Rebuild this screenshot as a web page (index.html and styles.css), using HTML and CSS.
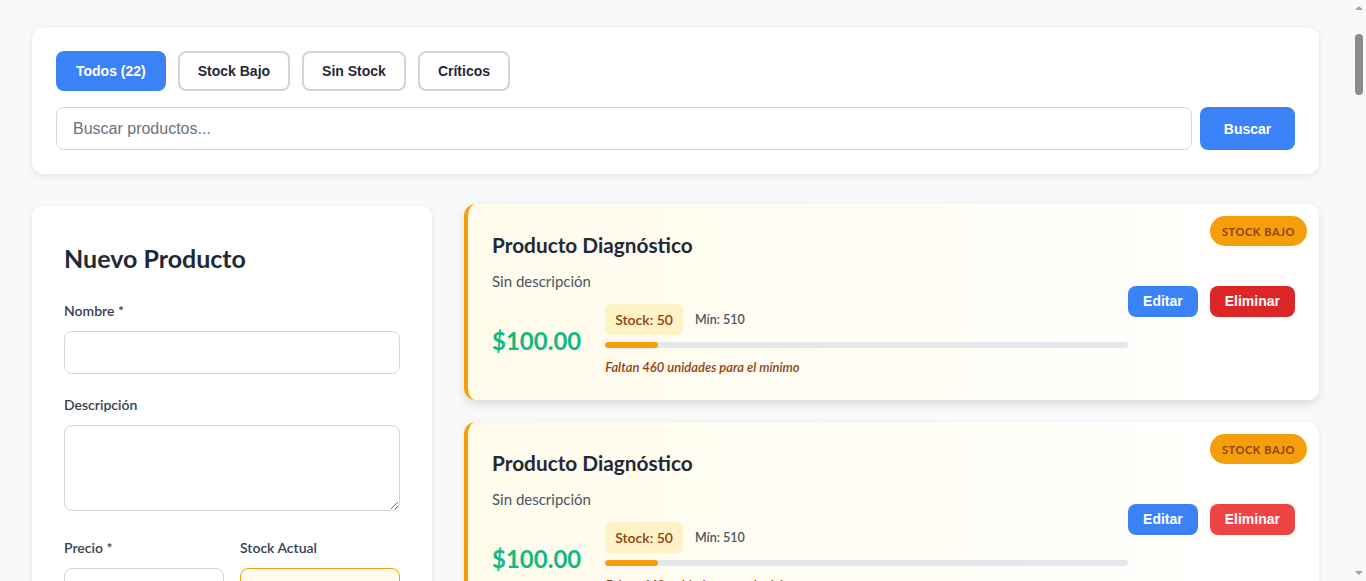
FILE: index.html
```html
<!DOCTYPE html>
<html lang="es">
<head>
<meta charset="utf-8">
<title>Inventario</title>
<link rel="stylesheet" href="styles.css">
</head>
<body>
<div class="app">
  <section class="panel filters">
    <div class="tabs">
      <button class="tab active">Todos (22)</button>
      <button class="tab">Stock Bajo</button>
      <button class="tab">Sin Stock</button>
      <button class="tab">Críticos</button>
    </div>
    <div class="search">
      <input class="search-input" type="text" placeholder="Buscar productos...">
      <button class="btn btn-blue btn-search">Buscar</button>
    </div>
  </section>

  <div class="layout">
    <aside class="panel form-card">
      <h2 class="form-title">Nuevo Producto</h2>
      <div class="field">
        <label class="label">Nombre *</label>
        <input class="input" type="text">
      </div>
      <div class="field">
        <label class="label">Descripción</label>
        <textarea class="input textarea"></textarea>
      </div>
      <div class="field-row">
        <div class="field">
          <label class="label">Precio *</label>
          <input class="input" type="text">
        </div>
        <div class="field">
          <label class="label">Stock Actual</label>
          <input class="input input-warn" type="text">
        </div>
      </div>
      <div class="field-row">
        <div class="field">
          <label class="label">Stock Mínimo</label>
          <input class="input" type="text">
        </div>
        <div class="field">
          <label class="label">Categoría</label>
          <input class="input" type="text">
        </div>
      </div>
    </aside>

    <main class="list">
      <article class="product lifted">
        <span class="badge">STOCK BAJO</span>
        <div class="info">
          <h3 class="name">Producto Diagnóstico</h3>
          <p class="desc">Sin descripción</p>
          <div class="meta">
            <div class="price">$100.00</div>
            <div class="stock">
              <div class="stock-top">
                <span class="stock-pill">Stock: 50</span>
                <span class="min">Mín: 510</span>
              </div>
              <div class="bar"><div class="fill" style="width:10%"></div></div>
              <p class="warn">Faltan 460 unidades para el mínimo</p>
            </div>
          </div>
        </div>
        <div class="actions">
          <button class="btn btn-blue btn-sm">Editar</button>
          <button class="btn btn-red btn-sm">Eliminar</button>
        </div>
      </article>

      <article class="product">
        <span class="badge">STOCK BAJO</span>
        <div class="info">
          <h3 class="name">Producto Diagnóstico</h3>
          <p class="desc">Sin descripción</p>
          <div class="meta">
            <div class="price">$100.00</div>
            <div class="stock">
              <div class="stock-top">
                <span class="stock-pill">Stock: 50</span>
                <span class="min">Mín: 510</span>
              </div>
              <div class="bar"><div class="fill" style="width:10%"></div></div>
              <p class="warn">Faltan 460 unidades para el mínimo</p>
            </div>
          </div>
        </div>
        <div class="actions">
          <button class="btn btn-blue btn-sm">Editar</button>
          <button class="btn btn-red-light btn-sm">Eliminar</button>
        </div>
      </article>

      <article class="product">
        <span class="badge">STOCK BAJO</span>
        <div class="info">
          <h3 class="name">Producto Diagnóstico</h3>
          <p class="desc">Sin descripción</p>
          <div class="meta">
            <div class="price">$100.00</div>
            <div class="stock">
              <div class="stock-top">
                <span class="stock-pill">Stock: 50</span>
                <span class="min">Mín: 510</span>
              </div>
              <div class="bar"><div class="fill" style="width:10%"></div></div>
              <p class="warn">Faltan 460 unidades para el mínimo</p>
            </div>
          </div>
        </div>
        <div class="actions">
          <button class="btn btn-blue btn-sm">Editar</button>
          <button class="btn btn-red-light btn-sm">Eliminar</button>
        </div>
      </article>
    </main>
  </div>
</div>

<div class="scrollbar" aria-hidden="true">
  <span class="sb-arrow sb-up"></span>
  <span class="sb-thumb"></span>
  <span class="sb-arrow sb-down"></span>
</div>
</body>
</html>
```

FILE: styles.css
```css
* { box-sizing: border-box; }

html, body {
  margin: 0;
  padding: 0;
  background: #f8f9fb;
}

body {
  font-family: Lato, "Noto Sans", sans-serif;
  color: #1f2937;
  padding-right: 15px;
}

/* drawn scrollbar */
.scrollbar {
  position: fixed;
  top: 0;
  right: 0;
  width: 15px;
  height: 100vh;
  background: #f9f9f9;
  display: flex;
  flex-direction: column;
  align-items: center;
}

.sb-arrow {
  width: 0;
  height: 0;
  border-left: 4px solid transparent;
  border-right: 4px solid transparent;
}

.sb-up {
  margin-top: 6px;
  border-bottom: 4px solid #a3a3a3;
}

.sb-thumb {
  width: 8px;
  height: 61px;
  margin-top: 24px;
  margin-left: 1px;
  border-radius: 4px;
  background: #8c8c8c;
}

.sb-down {
  margin-top: auto;
  margin-bottom: 6px;
  border-top: 4px solid #a3a3a3;
}

.app {
  padding: 27px 32px 40px;
}

.panel {
  background: #ffffff;
  border-radius: 12px;
  box-shadow: 0 2px 6px rgba(0, 0, 0, 0.09);
}

.filters {
  padding: 24px;
}

.tabs {
  display: flex;
  gap: 12px;
  margin-bottom: 16px;
}

.tab {
  height: 40px;
  padding: 0 18px;
  border: 2px solid #d1d5db;
  border-radius: 8px;
  background: #ffffff;
  color: #1f2937;
  font-family: "Liberation Sans", Arial, sans-serif;
  font-weight: 700;
  font-size: 14px;
}

.tab.active {
  background: #3b82f6;
  border-color: #3b82f6;
  color: #ffffff;
}

.search {
  display: flex;
  gap: 8px;
}

.search-input {
  flex: 1;
  height: 43px;
  padding: 0 16px;
  border: 1px solid #d1d5db;
  border-radius: 8px;
  font-family: "Liberation Sans", Arial, sans-serif;
  font-size: 16px;
  color: #1f2937;
}

.search-input::placeholder {
  color: #6b7280;
}

.btn {
  border: none;
  border-radius: 8px;
  color: #ffffff;
  font-family: "Liberation Sans", Arial, sans-serif;
  font-weight: 700;
  font-size: 14px;
}

.btn-blue { background: #3b82f6; }
.btn-red { background: #dc2626; }
.btn-red-light { background: #ef4444; }

.btn-search {
  width: 95px;
  height: 43px;
}

.layout {
  display: grid;
  grid-template-columns: 400px 1fr;
  gap: 32px;
  margin-top: 32px;
  align-items: start;
}

.form-card {
  padding: 32px;
}

.form-title {
  margin: 5px 0 29px;
  font-size: 25px;
  font-weight: 700;
  color: #1f2937;
}

.field {
  display: flex;
  flex-direction: column;
  margin-bottom: 22px;
  min-width: 0;
}

.label {
  font-size: 14px;
  font-weight: 600;
  color: #374151;
  margin-bottom: 12px;
}

.input {
  height: 43px;
  border: 1px solid #d1d5db;
  border-radius: 8px;
  padding: 0 12px;
  font-size: 15px;
  background: #ffffff;
  width: 100%;
}

.textarea {
  height: 86px;
  resize: vertical;
  padding: 10px 12px;
  font-family: inherit;
  margin-bottom: 6px;
}

.input-warn {
  background: #fffbeb;
  border-color: #f59e0b;
}

.field-row {
  display: grid;
  grid-template-columns: 1fr 1fr;
  gap: 16px;
}

.list {
  display: flex;
  flex-direction: column;
  gap: 20px;
}

.product {
  position: relative;
  display: flex;
  align-items: center;
  padding: 24px;
  border-left: 4px solid #f59e0b;
  border-radius: 12px;
  background: linear-gradient(90deg, #fffbeb 0%, #ffffff 100%);
  box-shadow: 0 2px 6px rgba(0, 0, 0, 0.08);
  min-height: 196px;
}

.product.lifted {
  transform: translateY(-2px);
  box-shadow: 0 4px 10px rgba(0, 0, 0, 0.12);
}

.badge {
  position: absolute;
  top: 12px;
  right: 12px;
  height: 30px;
  padding: 0 12px;
  display: flex;
  align-items: center;
  border-radius: 15px;
  background: #f59e0b;
  color: #92400e;
  font-size: 11px;
  font-weight: 700;
  letter-spacing: 0.6px;
}

.info {
  flex: 1;
  min-width: 0;
  padding-top: 3px;
}

.name {
  margin: 0 0 15px;
  font-size: 20.8px;
  font-weight: 700;
  color: #1f2937;
}

.desc {
  margin: 0 0 14px;
  font-size: 15px;
  color: #4b5563;
}

.meta {
  display: flex;
  align-items: center;
  gap: 24px;
}

.price {
  font-size: 24px;
  font-weight: 700;
  color: #10b981;
  padding-top: 2px;
}

.stock {
  flex: 1;
}

.stock-top {
  display: flex;
  align-items: center;
  gap: 12px;
}

.stock-pill {
  display: inline-block;
  padding: 7px 10px;
  border-radius: 6px;
  background: #fef3c7;
  color: #92400e;
  font-size: 14px;
  font-weight: 600;
}

.min {
  font-size: 12.5px;
  font-weight: 600;
  color: #4b5563;
}

.bar {
  height: 6px;
  margin-top: 7px;
  border-radius: 3px;
  background: #e5e7eb;
  overflow: hidden;
}

.fill {
  height: 100%;
  border-radius: 3px;
  background: #f59e0b;
}

.warn {
  margin: 11px 0 0;
  font-size: 13px;
  font-style: italic;
  font-weight: 600;
  color: #92400e;
}

.actions {
  display: flex;
  gap: 12px;
  margin-bottom: 2px;
}

.btn-sm {
  height: 31px;
  padding: 0 15px;
}
```
